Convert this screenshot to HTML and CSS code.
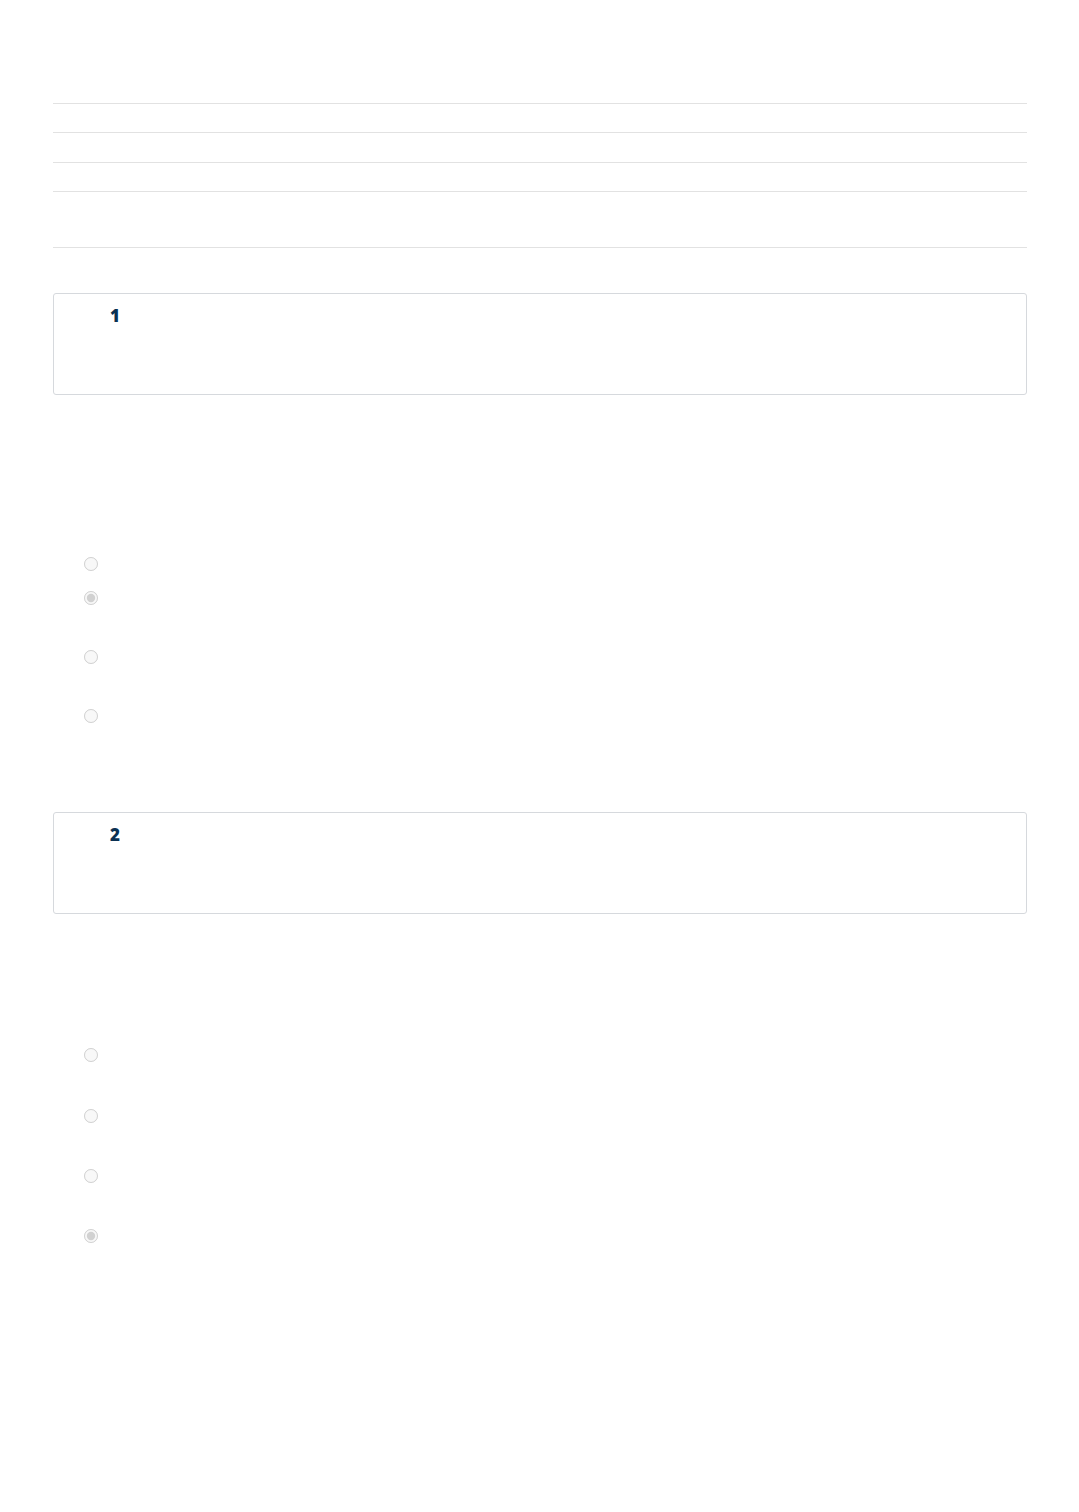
FILE: index.html
```html
<!DOCTYPE html>
<html lang="en">
<head>
<meta charset="utf-8">
<title>Quiz</title>
<link rel="stylesheet" href="styles.css">
</head>
<body>
<main class="page">
  <div class="info-table">
    <div class="info-row"></div>
    <div class="info-row r2"></div>
    <div class="info-row"></div>
    <div class="info-row big"></div>
  </div>

  <section class="question q1">
    <div class="q-box"><span class="q-num">1</span></div>
    <div class="options o1">
      <label class="opt short"><input type="radio" name="q1" disabled></label>
      <label class="opt tall"><input type="radio" name="q1" disabled checked></label>
      <label class="opt tall"><input type="radio" name="q1" disabled></label>
      <label class="opt"><input type="radio" name="q1" disabled></label>
    </div>
  </section>

  <section class="question q2">
    <div class="q-box"><span class="q-num">2</span></div>
    <div class="options o2">
      <label class="opt t61"><input type="radio" name="q2" disabled></label>
      <label class="opt t60"><input type="radio" name="q2" disabled></label>
      <label class="opt t60"><input type="radio" name="q2" disabled></label>
      <label class="opt"><input type="radio" name="q2" disabled checked></label>
    </div>
  </section>
</main>
</body>
</html>
```
FILE: styles.css
```css
html, body {
  margin: 0;
  padding: 0;
  background: #ffffff;
}
body {
  font-family: "Open Sans", "Liberation Sans", sans-serif;
  color: #0b3152;
  min-height: 1512px;
}
.page {
  padding: 103px 52px 0 53px;
}
.info-table {
  border-bottom: 1px solid #e2e2e2;
}
.info-row {
  height: 28px;
  border-top: 1px solid #e2e2e2;
}
.info-row.r2 {
  height: 29px;
}
.info-row.big {
  height: 55px;
}
.q-box {
  box-sizing: border-box;
  height: 102px;
  border: 1px solid #d6d9dd;
  border-radius: 3px;
  padding: 11px 0 0 56px;
}
.q-num {
  display: block;
  font-size: 17px;
  line-height: 21px;
  font-weight: 800;
  color: #0b3152;
}
.q1 {
  margin-top: 45px;
}
.q2 {
  margin-top: 89px;
}
.options {
  display: flex;
  flex-direction: column;
  padding-left: 31px;
}
.o1 {
  margin-top: 162px;
}
.o2 {
  margin-top: 134px;
}
.opt {
  display: block;
  height: 14px;
}
.opt.short {
  height: 34px;
}
.opt.tall {
  height: 59px;
}
.opt.t61 {
  height: 61px;
}
.opt.t60 {
  height: 60px;
}
.opt input {
  display: block;
  margin: 0;
  width: 14px;
  height: 14px;
}
```
